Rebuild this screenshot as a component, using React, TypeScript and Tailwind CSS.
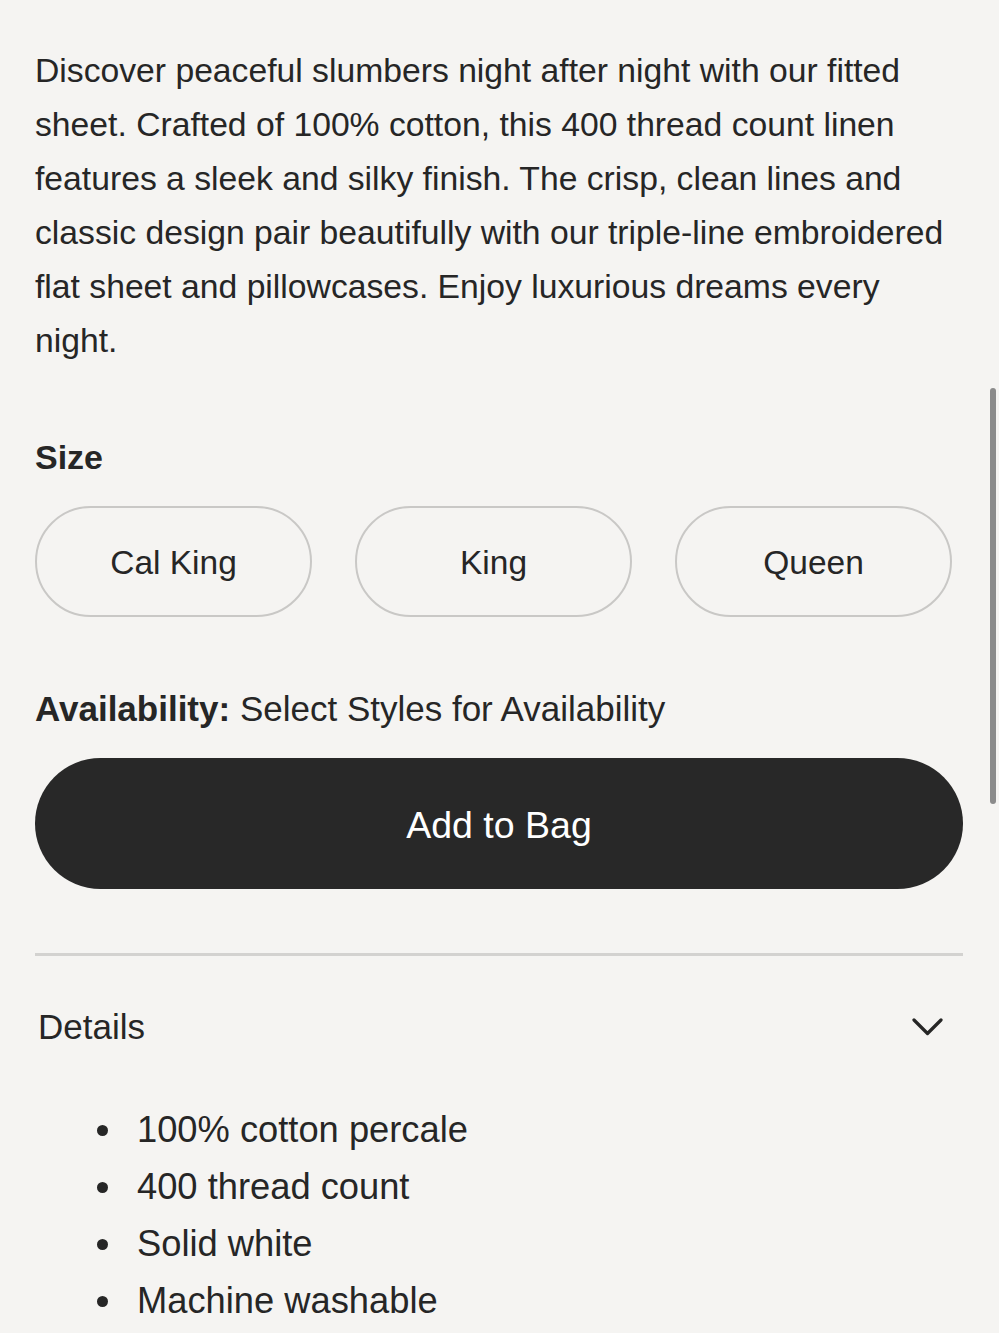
const SIZES = ["Cal King", "King", "Queen"];

const DETAILS = [
  "100% cotton percale",
  "400 thread count",
  "Solid white",
  "Machine washable",
];

export default function App() {
  return (
    <div
      className="relative min-h-[1333px] bg-[#f5f4f2] text-[#262626] overflow-hidden"
      style={{ fontFamily: '"Liberation Sans", Arial, sans-serif' }}
    >
      <div className="pl-[35px] pr-[36px] pt-[43px]">
        {/* DESCRIPTION */}
        <p className="text-[33.7px] leading-[54px]">
          Discover peaceful slumbers night after night with our fitted sheet.
          Crafted of 100% cotton, this 400 thread count linen features a sleek
          and silky finish. The crisp, clean lines and classic design pair
          beautifully with our triple-line embroidered flat sheet and
          pillowcases. Enjoy luxurious dreams every night.
        </p>

        {/* SIZE */}
        <h2 className="mt-[70px] text-[34px] leading-[40px] font-bold">Size</h2>
        <div className="mt-[29px] flex gap-[43px]">
          {SIZES.map((size) => (
            <button
              key={size}
              className="h-[111px] w-[277px] rounded-full border-2 border-[#c9c8c6] pt-[4px] text-[33.5px]"
            >
              {size}
            </button>
          ))}
        </div>

        {/* AVAILABILITY */}
        <p className="mt-[72px] text-[35px] leading-[40px]">
          <span className="font-bold">Availability:</span> Select Styles for
          Availability
        </p>

        <button className="mt-[29px] h-[131px] w-full rounded-full bg-[#282828] pt-[4px] text-[37.5px] text-white">
          Add to Bag
        </button>

        <div className="mt-[64px] h-[3px] bg-[#d3d2d0]" />

        {/* DETAILS */}
        <div className="mt-[51px] flex items-center justify-between pl-[3px] pr-[20px]">
          <h3 className="text-[35px] leading-[40px]">Details</h3>
          <svg
            width="31"
            height="18"
            viewBox="0 0 31 18"
            fill="none"
            stroke="#262626"
            strokeWidth="3.2"
            strokeLinecap="round"
            strokeLinejoin="round"
          >
            <path d="M2 2 L15.5 15.5 L29 2" />
          </svg>
        </div>

        <ul className="mt-[55px] pl-[62px]">
          {DETAILS.map((item) => (
            <li key={item} className="flex items-center h-[57px] text-[36.3px]">
              <span className="mr-[29px] h-[11px] w-[11px] rounded-full bg-[#262626]" />
              {item}
            </li>
          ))}
        </ul>
      </div>

      {/* SCROLLBAR */}
      <div className="absolute right-[3px] top-[388px] h-[416px] w-[6px] rounded-full bg-[#8b8b8b]" />
    </div>
  );
}
